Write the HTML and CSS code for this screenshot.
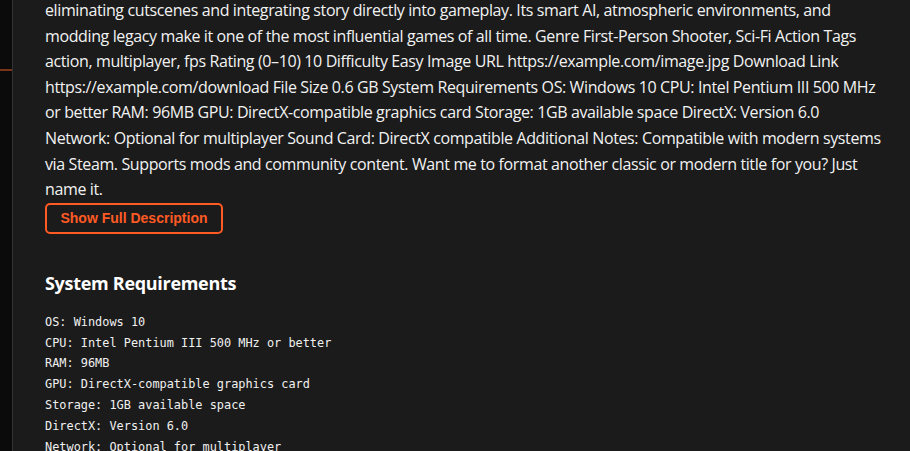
FILE: index.html
```html
<!DOCTYPE html>
<html>
<head>
<meta charset="utf-8">
<link rel="stylesheet" href="styles.css">
</head>
<body>
<div class="app">
  <aside class="sidebar"><div class="marker"></div></aside>
  <main class="main">
    <p class="desc">eliminating cutscenes and integrating story directly into gameplay. Its smart AI, atmospheric environments, and modding legacy make it one of the most influential games of all time. Genre First-Person Shooter, Sci-Fi Action Tags action, multiplayer, fps Rating (0–10) 10 Difficulty Easy Image URL https://example.com/image.jpg Download Link https://example.com/download File Size 0.6 GB System Requirements OS: Windows 10 CPU: Intel Pentium III 500 MHz or better RAM: 96MB GPU: DirectX-compatible graphics card Storage: 1GB available space DirectX: Version 6.0 Network: Optional for multiplayer Sound Card: DirectX compatible Additional Notes: Compatible with modern systems via Steam. Supports mods and community content. Want me to format another classic or modern title for you? Just name it.</p>
    <div class="actions"><button class="btn-outline">Show Full Description</button></div>
    <section class="reqs">
      <h2 class="reqs-title">System Requirements</h2>
      <ul class="reqs-list">
        <li>OS: Windows 10</li>
        <li>CPU: Intel Pentium III 500 MHz or better</li>
        <li>RAM: 96MB</li>
        <li>GPU: DirectX-compatible graphics card</li>
        <li>Storage: 1GB available space</li>
        <li>DirectX: Version 6.0</li>
        <li>Network: Optional for multiplayer</li>
        <li>Sound Card: DirectX compatible</li>
      </ul>
    </section>
  </main>
</div>
</body>
</html>
```
FILE: styles.css
```css
html, body {
  margin: 0;
  padding: 0;
  background: #1b1b1b;
  height: 100%;
  overflow: hidden;
}
.app {
  display: flex;
  height: 451px;
  overflow: hidden;
}
.sidebar {
  width: 12px;
  flex: none;
  background: #0b0b0b;
  border-right: 1px solid #333333;
  padding-top: 69px;
  box-sizing: content-box;
}
.marker {
  height: 2px;
  background: #7a3419;
}
.main {
  flex: 1;
  padding: 0 26px 0 32px;
  color: #f2f2f2;
  font-family: "Open Sans", "Noto Sans", sans-serif;
}
.desc {
  margin: -2px 0 0 0;
  font-size: 16px;
  line-height: 25.6px;
  letter-spacing: -0.38px;
}
.actions {
  display: flex;
}
.btn-outline {
  display: flex;
  align-items: center;
  justify-content: center;
  background: transparent;
  border: 2px solid #ff5a24;
  border-radius: 5px;
  color: #ff5a24;
  font-family: "Liberation Sans", Arial, sans-serif;
  font-weight: bold;
  font-size: 14px;
  line-height: 17px;
  white-space: nowrap;
  padding: 0;
  width: 178px;
  height: 31px;
  box-sizing: border-box;
}
.reqs {
  margin-top: 37px;
}
.reqs-title {
  margin: 0 0 17px 0;
  font-size: 18px;
  line-height: 24px;
  font-weight: 700;
  color: #ffffff;
  letter-spacing: -0.3px;
}
.reqs-list {
  list-style: none;
  margin: 0;
  padding: 0;
  font-family: "DejaVu Sans Mono", monospace;
  font-size: 11.9px;
  line-height: 20.8px;
  color: #f0f0f0;
}
```
